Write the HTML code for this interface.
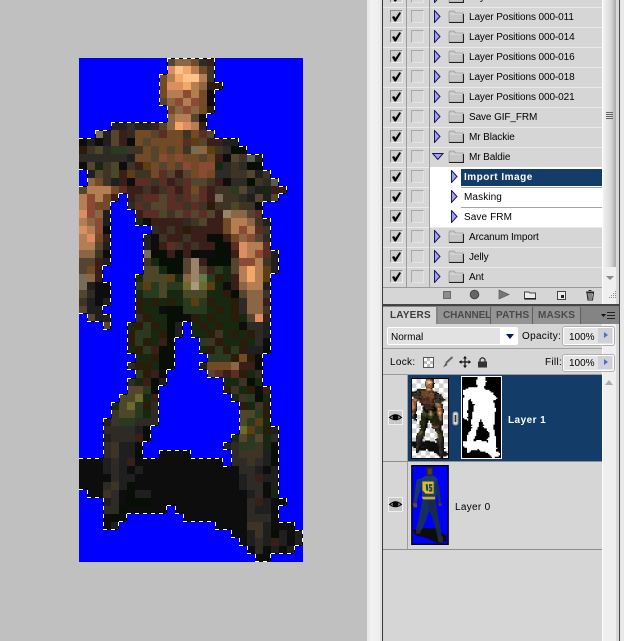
<!DOCTYPE html>
<html><head><meta charset="utf-8">
<style>
html,body{margin:0;padding:0;background:#c0c0c0;}
#p{position:relative;width:624px;height:641px;overflow:hidden;background:#c0c0c0;font:10px "Liberation Sans",sans-serif;color:#000;}
.a{position:absolute;}
svg{display:block;overflow:visible;}
.r{position:absolute;left:383px;width:219px;height:20px;background:#d6d6d6;box-shadow:inset 0 1px 0 #eaeaea;}
.r .t{position:absolute;left:86px;top:4px;line-height:13px;white-space:nowrap;letter-spacing:-.1px;}
.r .s{position:absolute;left:81px;top:4px;line-height:13px;white-space:nowrap;letter-spacing:.1px;}
.cb{position:absolute;left:7px;top:3px;width:11px;height:11px;background:#cfcfcf;border:1px solid #8f8f8f;border-right-color:#eee;border-bottom-color:#eee;}
.cb:after{content:"";position:absolute;left:1px;top:1px;width:9px;height:10px;background:#000;clip-path:polygon(0 5px,2px 4px,3.5px 6px,7.5px 0,9px 1px,4px 9.5px,2.5px 9.5px);}
.cb2{position:absolute;left:28px;top:3px;width:11px;height:11px;border:1px solid #a8a8a8;border-right-color:#e4e4e4;border-bottom-color:#e4e4e4;}
.v1,.v2{position:absolute;top:0;width:1px;height:20px;background:#9c9c9c;}
.v1{left:23px}.v2{left:46px}
.tr,.td,.fo{position:absolute;}
.tr{left:51px;top:3px}.td{left:49px;top:6px}.fo{left:65px;top:3px}
.wh{position:absolute;left:47px;top:0;width:172px;height:20px;background:#fff;}
.ln{position:absolute;left:78px;width:141px;height:1px;background:#a4a4a4;}
.tab{position:absolute;top:307px;height:17px;line-height:18px;font-weight:bold;color:#4a4a4a;font-size:10px;letter-spacing:.2px;overflow:hidden;white-space:nowrap;}
.inp{position:absolute;left:563px;width:49px;background:#e4e4e4;border:1px solid #fff;border-radius:2px;box-shadow:0 0 0 1px #b0b0b0;}
</style></head><body>
<svg width="0" height="0" style="position:absolute">
<defs>
<symbol id="tri" viewBox="0 0 7 13" width="7" height="13"><path d="M.5 .5L6 6.5.5 12.5z" fill="#a0a0f4" stroke="#16165a"/></symbol>
<symbol id="trd" viewBox="0 0 12 8" width="12" height="8"><path d="M.7 .5H11L5.8 6.5z" fill="#a0a0f4" stroke="#16165a"/></symbol>
<symbol id="fol" viewBox="0 0 16 13" width="16" height="13"><path d="M1 2.500Q1 1 2.500 1H6L7.500 3H15V12H1z" fill="#c6c6c6" stroke="#9a9a9a" stroke-width=".8"/><path d="M1 12.500H15.500V4" fill="none" stroke="#222" stroke-width="1"/><path d="M2 4H14" stroke="#e0e0e0"/></symbol>
<symbol id="eye" viewBox="0 0 15 15" width="15" height="15"><rect x=".5" y=".5" width="14" height="14" fill="#c8c8c8" stroke="#efefef"/><path d="M1.500 7.500Q7.500 2 13.500 7.500Q7.500 12 1.500 7.500z" fill="#888" stroke="#000"/><circle cx="7.500" cy="7.200" r="2.800" fill="#000"/></symbol>
</defs></svg>
<div id="p">
<svg id="art" class="a" style="left:79px;top:58px" width="224" height="504" shape-rendering="crispEdges"></svg>
<div class="a" style="left:367px;top:0;width:15px;height:641px;background:linear-gradient(90deg,#e6e6e6,#f2f2f2 30%,#eeeeee 80%,#dedede)"></div>
<div class="a" style="left:382px;top:0;width:1px;height:641px;background:#3a3a3a"></div>
<div class="a" style="left:383px;top:0;width:219px;height:641px;background:#d6d6d6"></div>
<div class="a" style="left:602px;top:0;width:1px;height:641px;background:#fff"></div>
<div class="a" style="left:603px;top:0;width:16px;height:641px;background:#efefef"></div>
<div class="a" style="left:619px;top:0;width:1px;height:641px;background:#444"></div>
<div class="a" style="left:620px;top:0;width:4px;height:641px;background:#e8e8e8"></div>

<div class="r" style="top:-13px"><i class="cb"></i><i class="cb2"></i><b class="v1"></b><b class="v2"></b><svg class="tr" width="7" height="13"><use href="#tri"/></svg><svg class="fo" width="16" height="13"><use href="#fol"/></svg><span class="t">Layer Positions 000-009</span></div>
<div class="r" style="top:7px"><i class="cb"></i><i class="cb2"></i><b class="v1"></b><b class="v2"></b><svg class="tr" width="7" height="13"><use href="#tri"/></svg><svg class="fo" width="16" height="13"><use href="#fol"/></svg><span class="t">Layer Positions 000-011</span></div>
<div class="r" style="top:27px"><i class="cb"></i><i class="cb2"></i><b class="v1"></b><b class="v2"></b><svg class="tr" width="7" height="13"><use href="#tri"/></svg><svg class="fo" width="16" height="13"><use href="#fol"/></svg><span class="t">Layer Positions 000-014</span></div>
<div class="r" style="top:47px"><i class="cb"></i><i class="cb2"></i><b class="v1"></b><b class="v2"></b><svg class="tr" width="7" height="13"><use href="#tri"/></svg><svg class="fo" width="16" height="13"><use href="#fol"/></svg><span class="t">Layer Positions 000-016</span></div>
<div class="r" style="top:67px"><i class="cb"></i><i class="cb2"></i><b class="v1"></b><b class="v2"></b><svg class="tr" width="7" height="13"><use href="#tri"/></svg><svg class="fo" width="16" height="13"><use href="#fol"/></svg><span class="t">Layer Positions 000-018</span></div>
<div class="r" style="top:87px"><i class="cb"></i><i class="cb2"></i><b class="v1"></b><b class="v2"></b><svg class="tr" width="7" height="13"><use href="#tri"/></svg><svg class="fo" width="16" height="13"><use href="#fol"/></svg><span class="t">Layer Positions 000-021</span></div>
<div class="r" style="top:107px"><i class="cb"></i><i class="cb2"></i><b class="v1"></b><b class="v2"></b><svg class="tr" width="7" height="13"><use href="#tri"/></svg><svg class="fo" width="16" height="13"><use href="#fol"/></svg><span class="t">Save GIF_FRM</span></div>
<div class="r" style="top:127px"><i class="cb"></i><i class="cb2"></i><b class="v1"></b><b class="v2"></b><svg class="tr" width="7" height="13"><use href="#tri"/></svg><svg class="fo" width="16" height="13"><use href="#fol"/></svg><span class="t">Mr Blackie</span></div>
<div class="r" style="top:147px"><i class="cb"></i><i class="cb2"></i><b class="v1"></b><b class="v2"></b><svg class="td" width="12" height="8"><use href="#trd"/></svg><svg class="fo" width="16" height="13"><use href="#fol"/></svg><span class="t">Mr Baldie</span></div>
<div class="r" style="top:167px"><i class="wh"></i><i class="cb"></i><i class="cb2"></i><b class="v1"></b><b class="v2"></b><svg class="tr" style="left:68px" width="7" height="13"><use href="#tri"/></svg><div class="a" style="left:78px;top:2px;width:141px;height:17px;background:#143c69"></div><span class="s" style="font-weight:bold;color:#fff;letter-spacing:.5px">Import Image</span></div>
<div class="r" style="top:187px"><i class="wh"></i><i class="cb"></i><i class="cb2"></i><b class="v1"></b><b class="v2"></b><i class="ln" style="top:0"></i><svg class="tr" style="left:68px" width="7" height="13"><use href="#tri"/></svg><span class="s">Masking</span></div>
<div class="r" style="top:207px"><i class="wh"></i><i class="cb"></i><i class="cb2"></i><b class="v1"></b><b class="v2"></b><i class="ln" style="top:0"></i><svg class="tr" style="left:68px" width="7" height="13"><use href="#tri"/></svg><span class="s">Save FRM</span></div>
<div class="r" style="top:227px"><i class="cb"></i><i class="cb2"></i><b class="v1"></b><b class="v2"></b><svg class="tr" width="7" height="13"><use href="#tri"/></svg><svg class="fo" width="16" height="13"><use href="#fol"/></svg><span class="t">Arcanum Import</span></div>
<div class="r" style="top:247px"><i class="cb"></i><i class="cb2"></i><b class="v1"></b><b class="v2"></b><svg class="tr" width="7" height="13"><use href="#tri"/></svg><svg class="fo" width="16" height="13"><use href="#fol"/></svg><span class="t">Jelly</span></div>
<div class="r" style="top:267px"><i class="cb"></i><i class="cb2"></i><b class="v1"></b><b class="v2"></b><svg class="tr" width="7" height="13"><use href="#tri"/></svg><svg class="fo" width="16" height="13"><use href="#fol"/></svg><span class="t">Ant</span></div>
<div class="a" style="left:383px;top:287px;width:219px;height:1px;background:#9a9a9a"></div>

<div class="a" style="left:603px;top:0;width:13px;height:267px;background:linear-gradient(90deg,#f2f2f2,#d8d8d8 60%,#a8a8a8)"></div>
<div class="a" style="left:616px;top:0;width:3px;height:641px;background:#d0d0d0;opacity:.7"></div>
<div class="a" style="left:606px;top:112px;width:7px;height:1px;background:#666;box-shadow:0 2px 0 #666,0 4px 0 #666,0 6px 0 #666"></div>
<div class="a" style="left:606px;top:276px;width:0;height:0;border-left:4px solid transparent;border-right:4px solid transparent;border-top:4px solid #888"></div>

<svg class="a" style="left:383px;top:288px" width="236" height="17">
<rect x="60.500" y="3.500" width="7" height="7" fill="#8c8c8c" stroke="#6a6a6a"/>
<circle cx="91.500" cy="6.500" r="4.300" fill="#666" stroke="#444"/>
<path d="M116 2L126 6.500 116 11z" fill="#777" stroke="#5a5a5a" stroke-width=".7"/>
<path d="M141.500 4L146 4 147 5H152.500V10.500H141.500z" fill="#ececec" stroke="#444"/><path d="M141.500 11H153" stroke="#000" stroke-width="1"/>
<rect x="174.500" y="3.500" width="8" height="8" fill="#ececec" stroke="#444"/><rect x="178" y="7" width="3" height="3" fill="#222"/>
<path d="M203 4H211M204 5L205 12H209.500L210.500 5z" fill="#ddd" stroke="#222"/><path d="M205.500 2.500H208.500" stroke="#222"/><path d="M206 6V11M208 6V11" stroke="#333"/>
<path d="M232 3h1v1h-1zM230 5h1v1h-1zM232 5h1v1h-1zM228 7h1v1h-1zM230 7h1v1h-1zM232 7h1v1h-1zM226 9h1v1h-1zM228 9h1v1h-1zM230 9h1v1h-1zM232 9h1v1h-1z" fill="#8a8a8a"/>
</svg>

<div class="a" style="left:383px;top:304px;width:236px;height:2px;background:#454545"></div>
<div class="a" style="left:383px;top:306px;width:236px;height:18px;background:#848484"></div>
<div class="a" style="left:383px;top:307px;width:53px;height:17px;background:#d6d6d6"></div>
<div class="tab" style="left:390px;width:44px;color:#3c3c3c">LAYERS</div>
<div class="a" style="left:438px;top:307px;width:142px;height:17px;background:#949494"></div>
<div class="tab" style="left:443px;width:47px;letter-spacing:-.1px">CHANNELS</div>
<div class="a" style="left:490px;top:307px;width:1px;height:17px;background:#5e5e5e"></div>
<div class="tab" style="left:496px;width:36px;">PATHS</div>
<div class="a" style="left:532px;top:307px;width:1px;height:17px;background:#5e5e5e"></div>
<div class="tab" style="left:538px;width:40px;">MASKS</div>
<div class="a" style="left:580px;top:307px;width:1px;height:17px;background:#5e5e5e"></div>
<svg class="a" style="left:601px;top:312px" width="15" height="8"><path d="M0 2H5L2.500 5z" fill="#111"/><path d="M6 .5H14M6 3.500H14M6 6.500H14" stroke="#222"/></svg>

<div class="a" style="left:387px;top:327px;width:131px;height:18px;background:#fff;border-radius:2px"></div>
<div class="a" style="left:388px;top:328px;width:112px;height:16px;background:#e2e2e2"></div>
<div class="a" style="left:391px;top:331px;line-height:13px;">Normal</div>
<div class="a" style="left:506px;top:334px;width:0;height:0;border-left:4px solid transparent;border-right:4px solid transparent;border-top:5px solid #0a1a5a"></div>
<div class="a" style="left:522px;top:330px;line-height:13px;letter-spacing:.3px">Opacity:</div>
<div class="inp" style="top:327px;height:16px"></div>
<div class="a" style="left:598px;top:328px;width:14px;height:15px;background:#cfd0d8"></div>
<div class="a" style="left:569px;top:331px;line-height:13px;">100%</div>
<div class="a" style="left:604px;top:332px;width:0;height:0;border-top:3.500px solid transparent;border-bottom:3.500px solid transparent;border-left:4px solid #4c70c8"></div>
<div class="a" style="left:383px;top:348px;width:219px;height:1px;background:#a0a0a0"></div>
<div class="a" style="left:390px;top:356px;line-height:13px;letter-spacing:.3px">Lock:</div>
<div class="a" style="left:423px;top:357px;width:9px;height:9px;border:1px solid #555;background:repeating-conic-gradient(#bbb 0 25%,#fff 0 50%) 0 0/6px 6px"></div>
<svg class="a" style="left:441px;top:356px" width="13" height="13"><path d="M11.500 1L5 7" stroke="#666" stroke-width="2"/><path d="M5 6.500L2 11.500 1 12 6.500 9z" fill="#555"/></svg>
<svg class="a" style="left:459px;top:356px" width="12" height="12"><path d="M6 .5V11.500M.5 6H11.500" stroke="#111" stroke-width="1.200"/><path d="M6 0L8 2.500H4zM6 12L8 9.500H4zM0 6L2.500 4V8zM12 6L9.500 4V8z" fill="#111"/></svg>
<svg class="a" style="left:477px;top:356px" width="11" height="12"><path d="M3 6V3.500Q5.500 0 8 3.500V6" fill="none" stroke="#333" stroke-width="1.300"/><rect x="1" y="5.500" width="9" height="6" fill="#333"/></svg>
<div class="a" style="left:545px;top:356px;line-height:13px;letter-spacing:.3px">Fill:</div>
<div class="inp" style="top:355px;height:14px"></div>
<div class="a" style="left:598px;top:356px;width:14px;height:13px;background:#cfd0d8"></div>
<div class="a" style="left:569px;top:357px;line-height:13px;">100%</div>
<div class="a" style="left:604px;top:359px;width:0;height:0;border-top:3.500px solid transparent;border-bottom:3.500px solid transparent;border-left:4px solid #4c70c8"></div>

<div class="a" style="left:383px;top:374px;width:219px;height:1px;background:#9a9a9a"></div>
<div class="a" style="left:407px;top:375px;width:1px;height:174px;background:#9c9c9c"></div>
<div class="a" style="left:408px;top:375px;width:194px;height:86px;background:#143c69"></div>
<div class="a" style="left:383px;top:461px;width:219px;height:1px;background:#8e8e8e"></div>
<div class="a" style="left:383px;top:549px;width:219px;height:1px;background:#8e8e8e"></div>
<svg class="a" style="left:388px;top:410px" width="15" height="15"><use href="#eye"/></svg>
<svg class="a" style="left:388px;top:497px" width="15" height="15"><use href="#eye"/></svg>

<div class="a" style="left:411px;top:378px;width:36px;height:79px;border:1px solid #000;background:repeating-conic-gradient(#cfcfcf 0 25%,#fff 0 50%) 0 0/9px 9px;overflow:hidden"><svg id="th" width="36" height="79" viewBox="0 0 224 504" preserveAspectRatio="none" shape-rendering="crispEdges"></svg></div>
<svg class="a" style="left:452px;top:411px" width="7" height="15"><rect x="1" y="1" width="5" height="13" rx="2" fill="#d8d8d8" stroke="#8a8a8a"/><rect x="2.700" y="4" width="1.600" height="7" fill="#333"/></svg>
<div class="a" style="left:461px;top:376px;width:41px;height:83px;background:#fff"></div>
<div class="a" style="left:462px;top:377px;width:39px;height:81px;background:#000;overflow:hidden"><svg id="mk" style="position:absolute;left:1px;top:0" width="37" height="81" viewBox="0 0 224 504" preserveAspectRatio="none"></svg></div>
<div class="a" style="left:508px;top:414px;line-height:13px;font-weight:bold;color:#fff;letter-spacing:.45px">Layer 1</div>

<svg class="a" style="left:411px;top:465px" width="38" height="80" viewBox="18 12 114 242">
<rect x="18" y="12" width="114" height="242" fill="#000"/><rect x="22" y="16" width="106" height="234" fill="#0000f8"/>
<path d="M22 208L50 203 92 203 125 226V243L100 249 62 232 30 224z" fill="#0c0c10"/>
<path d="M52 116H75L72 150 62 180 50 208 42 218 32 210 42 170z" fill="#182f5e"/>
<path d="M70 116H92L97 150 105 195 112 238 100 241 90 195 78 160 72 150z" fill="#16294f"/>
<path d="M48 52L62 45H88L98 55 93 118H52z" fill="#1c3a70"/>
<path d="M35 56L50 52 46 90 38 110 34 132 24 130 30 85z" fill="#1a3566"/>
<path d="M96 55 104 85 108 128 102 132 96 100 90 78z" fill="#172e5c"/>
<path d="M64 18H84V44H64z" fill="#33261a"/><path d="M69 24H80V40H69z" fill="#5a3f28"/>
<path d="M52 62H86V99H62L52 88z" fill="#d8c020"/><path d="M62 70H68L70 90H64z" fill="#1c3a70"/><path d="M72 70H82V75H76V79H82V92H72V87H77V83H72z" fill="#1c3a70"/>
<path d="M50 108H90V116H54z" fill="#c8a830"/>
<path d="M22 128H36V140H26z" fill="#6a4a30"/><path d="M100 128H110V136H102z" fill="#4a3a30"/><path d="M98 228H114V246H100z" fill="#2a2a2a"/><path d="M34 206H46V220H32z" fill="#26262e"/>
</svg>
<div class="a" style="left:455px;top:501px;line-height:13px;letter-spacing:.3px">Layer 0</div>
<svg class="a" style="left:605px;top:380px" width="8" height="5"><path d="M4 0L8 5H0z" fill="#aaa"/></svg>
</div>
<script>
var P={a:'#0d0d0d',b:'#1f1f1f',c:'#2e2a25',d:'#3e3426',e:'#55452f',f:'#734a26',g:'#8c6644',h:'#b47e52',i:'#dc8e60',j:'#f4a868',k:'#ffc28a',l:'#3a1e1a',m:'#5a2e24',n:'#8a4a34',o:'#060e05',p:'#16280f',q:'#2a3a20',r:'#4c4728',s:'#6c6a2c',t:'#a89a80',u:'#2a1c08',v:'#5c3e10',w:'#5a5a5a',x:'#9a8468',y:'#7a6a58',z:'#607a48'};
function R(n,c){return new Array(n+1).join(c||'a');}
var G=[
"...........eggfcl...........",
"...........ikjhfd...........",
"..........fhjkkhd...........",
"..........fiijhguu..........",
"..........fhhnhfa...........",
"..........egnhnfa...........",
"...........fgngfu...........",
"...........ghhea............",
"....bbcbblrgjihl............",
"..ybelcffemffdfme...........",
"ababelofeffffmvellbb........",
"udrcqqddfefefdygvdcoa.......",
"ccccccbffenfnffeflaedwb.....",
"aepdradlvfefenfnnpcdcoo.....",
".bedrlvddfmelefnfccddebd....",
".gfdblammdmldmeedlaccodcw...",
"ehhhfmlldldmlmfmlddqecbpll..",
"hnhfl.ldmmemdmemlyddcbebe...",
"hnff..cmdeemmdmduddrdda.....",
"ingb...lmmrdememelxggem.....",
"hgnb...pallllcdrllfhhgdb....",
"ihno.....cldlullllfhnhmd....",
"hifl....badlldlloolfgnec....",
"hheb....balmdldlloomihhm....",
"ggda....yoololoaaoolihnmb...",
"eelb....dpoooexloooennhdb...",
"efl.....rrpooexelqpehjhvb...",
"ygl....prrrvpgxzquplhjhv....",
"ybaa...qvqrqqstsvpalghhb....",
"ecaa...pqqrpprrrppuoeggd....",
"dbab...upupupqvquppucggl....",
"ebb....uppaooqqqpupucggd....",
".ebb...cuppooaupuppupeil....",
"...e..puqupob.pupuppaccb....",
"......uqqpuob.ppudpupucb....",
"......uquplo...qduppupca....",
"......puqloo...puququbbo....",
".......ppuoo....qqqufua.....",
"......cuupoo...bfffgllo.....",
".......qulo.....emlmupc.....",
"......cplob.......ppdop.....",
"......eeqo........udpual....",
".....rrspl.........pdqop....",
"....prsquc..........updu....",
"....drrqpc..........rrqu....",
"...bdqqccc..........rqvp....",
"...ccccbo...........svqub...",
"...bccclo..........peqepc...",
"...cdbba..........bcqqdpa...",
"...cdbbo..aaaa.....cdddbo...",
"aaabcbl"+R(11)+".ccdcbo...",
"aaabcbab"+R(12)+"ccbab...",
"aaaacbb"+R(13)+"bclbb...",
"aaacdbo"+R(13)+"bccab...",
".aadcaobb"+R(12)+"bcap...",
"...bcaooo"+R(12)+"clbaa..",
"...ccoaaaaa."+R(9)+"cbba...",
"...aoa......."+R(8)+"ccca...",
"...ab"+R(12,'.')+"aaaaddbaaa.",
R(19,'.')+"aabdbobab",
R(20,'.')+"abcblbab",
R(21,'.')+"acabab.",
R(22,'.')+"aa...."
];
var cells='',mask='',ant='';
function blue(r,c){return !G[r]||G[r].charAt(c)==='.'||G[r].charAt(c)==='';}
for(var r=0;r<G.length;r++){
 var s=G[r],c=0;
 while(c<28){
  var ch=s.charAt(c),e=c+1;
  while(e<28&&s.charAt(e)===ch)e++;
  if(ch&&ch!=='.'){
   cells+='<rect x="'+c*8+'" y="'+r*8+'" width="'+(e-c)*8+'" height="8" fill="'+P[ch]+'"/>';
   mask+='M'+c*8+' '+r*8+'h'+(e-c)*8+'v8h-'+(e-c)*8+'z';
  }
  c=e;
 }
 for(c=0;c<28;c++){
  if(blue(r,c))continue;
  var x=c*8,y=r*8;
  if(blue(r-1,c))ant+='M'+x+' '+(y+.5)+'h8';
  if(blue(r+1,c))ant+='M'+x+' '+(y+7.5)+'h8';
  if(c>0&&blue(r,c-1))ant+='M'+(x+.5)+' '+y+'v8';
  if(c<27&&blue(r,c+1)||c==27)ant+='M'+(x+7.5)+' '+y+'v8';
 }
}
document.getElementById('art').innerHTML='<rect width="224" height="504" fill="#0000ff"/>'+cells+'<path d="'+ant+'" fill="none" stroke="#000" stroke-width="1"/><path d="'+ant+'" fill="none" stroke="#fff" stroke-width="1" stroke-dasharray="4 4"/>';
document.getElementById('th').innerHTML=cells;
document.getElementById('mk').innerHTML='<path d="'+mask+'" fill="#fff"/>';
</script>
</body></html>
